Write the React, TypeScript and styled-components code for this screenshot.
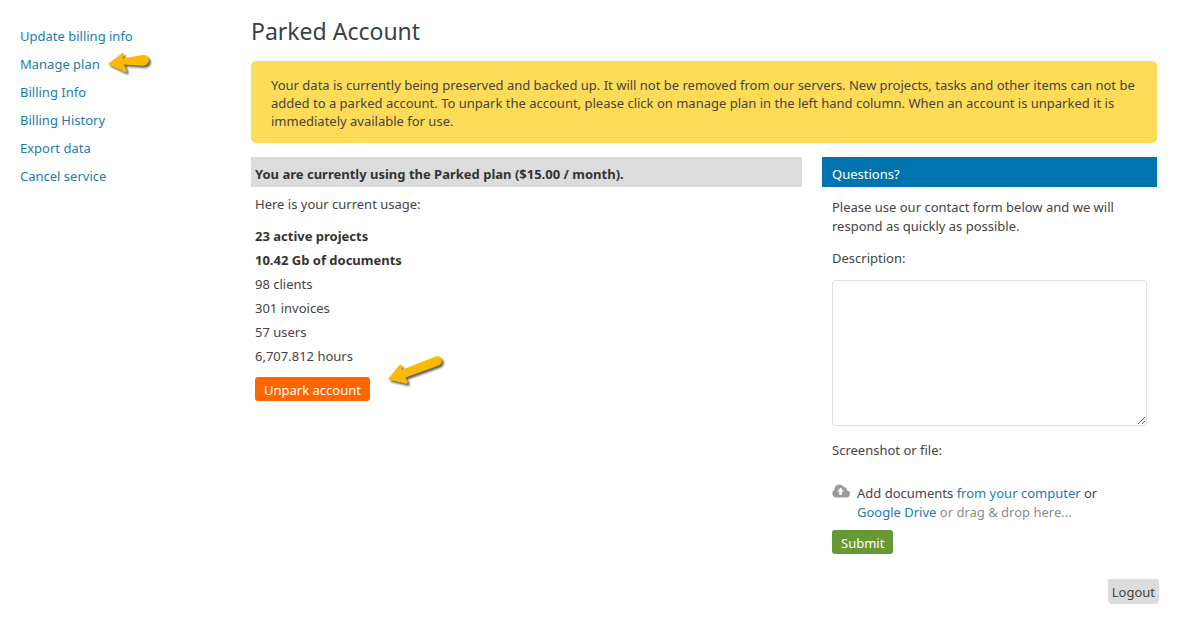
import React from "react";
import styled, { createGlobalStyle } from "styled-components";

const GlobalStyle = createGlobalStyle`
  *, *::before, *::after { box-sizing: border-box; }
  body {
    margin: 0;
    background: #fff;
    color: #444;
    font: 13px/19px "Noto Sans", "Open Sans", sans-serif;
  }
  h1, h2, p, ul { margin: 0; padding: 0; }
  ul { list-style: none; }
  button, textarea { font: inherit; }
`;

const Page = styled.div`
  display: flex;
  align-items: flex-start;
  padding: 16px 20px 0;
`;

const Sidebar = styled.nav`
  flex: 0 0 231px;
  padding-top: 6px;
`;

const NavItem = styled.li`
  position: relative;
  width: fit-content;
  line-height: 28px;
`;

const Link = styled.a`
  color: #1b7bb0;
  text-decoration: none;
`;

const Main = styled.main`
  flex: 1;
  min-width: 0;
`;

const Title = styled.h1`
  font-size: 23px;
  line-height: 30px;
  font-weight: 400;
  color: #3a3f44;
`;

const Notice = styled.p`
  margin-top: 15px;
  padding: 15px 12px 13px 20px;
  border-radius: 5px;
  background: #ffdc57;
  line-height: 18px;
`;

const Columns = styled.div`
  display: grid;
  grid-template-columns: 551fr 335fr;
  gap: 20px;
  margin-top: 14px;
`;

const PanelTitle = styled.h2<{ $tone: "plan" | "help" }>`
  padding: ${(p) => (p.$tone === "plan" ? "7px 4px 3px" : "7px 10px 3px")};
  background: ${(p) => (p.$tone === "plan" ? "#dcdcdc" : "#0074ad")};
  color: ${(p) => (p.$tone === "plan" ? "#333" : "#fff")};
  font-size: 13px;
  line-height: 20px;
  font-weight: ${(p) => (p.$tone === "plan" ? 700 : 400)};
`;

const PlanBody = styled.div`
  padding: 8px 4px 0;
`;

const UsageList = styled.ul`
  margin: 10px 0 9px;
`;

const UsageItem = styled.li<{ $strong?: boolean }>`
  line-height: 24px;
  font-weight: ${(p) => (p.$strong ? 700 : 400)};
  color: ${(p) => (p.$strong ? "#333" : "#444")};
`;

const ButtonAnchor = styled.div`
  position: relative;
  width: fit-content;
`;

const Button = styled.button<{ $color: string }>`
  display: block;
  height: 24px;
  padding: 2px 9px 0;
  border: 0;
  border-radius: 3px;
  background: ${(p) => p.$color};
  color: #fff;
  line-height: 22px;
`;

const ContactForm = styled.form`
  padding: 11px 10px 0;
`;

const Label = styled.label`
  display: block;
  margin-top: 13px;
`;

const Description = styled.textarea`
  display: block;
  width: 100%;
  height: 146px;
  margin: 12px 0 15px;
  border: 1px solid #e0e0e0;
  border-radius: 3px;
  background: #fff;
  resize: both;
`;

const UploadRow = styled.div`
  display: flex;
  gap: 7px;
  margin: 24px 0 8px;
`;

const UploadText = styled.p`
  flex: 1;
  padding-right: 20px;
`;

const Muted = styled.span`
  color: #8c8c8c;
`;

const Footer = styled.footer`
  display: flex;
  justify-content: flex-end;
  padding: 25px 18px 20px;
`;

const Logout = styled.button`
  height: 25px;
  padding: 2px 4px 0;
  border: 0;
  border-radius: 1px 1px 4px 4px;
  background: #dcdcdc;
  color: #444;
  line-height: 23px;
`;

const Pointer = styled.svg<{ $gap: number; $rise: number }>`
  position: absolute;
  left: calc(100% + ${(p) => p.$gap}px);
  top: ${(p) => p.$rise}px;
  overflow: visible;
  filter: drop-shadow(2px 2px 1px rgba(0, 0, 0, 0.65));
  pointer-events: none;
`;

const CloudIcon = () => (
  <svg width="18" height="14" viewBox="0 0 18 14" aria-hidden="true">
    <path
      fill="#999"
      d="M4.5 13.5A4.2 4.2 0 0 1 2.4 5.7 5 5 0 0 1 11.8 3.1 2.7 2.7 0 0 1 14.8 6.2 3.7 3.7 0 0 1 13.5 13.5Z"
    />
    <path fill="#fff" d="M8.6 3.6 12.2 7.4H9.9V11H7.3V7.4H5Z" />
  </svg>
);

const links = [
  "Update billing info",
  "Manage plan",
  "Billing Info",
  "Billing History",
  "Export data",
  "Cancel service",
];

const usage = [
  { text: "23 active projects", strong: true },
  { text: "10.42 Gb of documents", strong: true },
  { text: "98 clients" },
  { text: "301 invoices" },
  { text: "57 users" },
  { text: "6,707.812 hours" },
];

export default function App() {
  return (
    <>
      <GlobalStyle />
      <Page>
        <Sidebar aria-label="Account">
          <ul>
            {links.map((text) => (
              <NavItem key={text}>
                <Link href="#">{text}</Link>
                {text === "Manage plan" && (
                  <Pointer $gap={8} $rise={2} width="42" height="22" viewBox="0 0 42 22" aria-hidden="true">
                    <path
                      fill="#fcb900"
                      d="M0.5 11.5 13.5 1.5C15 .5 16 1.5 15.5 3L14.5 6.5 33 3.2C38 2.6 41 5 40.8 8.5 40.6 12 38 14 33 13.8L16 12.6 18.5 18.5C19 20 18 20.8 16.5 20L1.3 12.8Q0 12.2 .5 11.5Z"
                    />
                  </Pointer>
                )}
              </NavItem>
            ))}
          </ul>
        </Sidebar>
        <Main>
          <Title>Parked Account</Title>
          <Notice>
            Your data is currently being preserved and backed up. It will not be removed from our
            servers. New projects, tasks and other items can not be added to a parked account. To
            unpark the account, please click on manage plan in the left hand column. When an account
            is unparked it is immediately available for use.
          </Notice>
          <Columns>
            <section>
              <PanelTitle $tone="plan">
                You are currently using the Parked plan ($15.00 / month).
              </PanelTitle>
              <PlanBody>
                <p>Here is your current usage:</p>
                <UsageList>
                  {usage.map((item) => (
                    <UsageItem key={item.text} $strong={item.strong}>
                      {item.text}
                    </UsageItem>
                  ))}
                </UsageList>
                <ButtonAnchor>
                  <Button type="button" $color="#ff6600">
                    Unpark account
                  </Button>
                  <Pointer $gap={18} $rise={-22} width="55" height="30" viewBox="0 0 55 30" aria-hidden="true">
                    <path
                      fill="#fcb900"
                      d="M.6 23.5 11.2 10.2C12.4 9 13.5 9.5 13.6 11L14 14.8 47 1.8C50.5.6 53 2 53.6 4.6 54.2 7.3 53 9.5 50 10.8L17.5 22.4 19.6 26.5C20.2 28 19.4 29 18 28.7L1.8 25Q.2 24.6.6 23.5Z"
                    />
                  </Pointer>
                </ButtonAnchor>
              </PlanBody>
            </section>
            <section>
              <PanelTitle $tone="help">Questions?</PanelTitle>
              <ContactForm onSubmit={(e) => e.preventDefault()}>
                <p>Please use our contact form below and we will respond as quickly as possible.</p>
                <Label htmlFor="description">Description:</Label>
                <Description id="description" />
                <p>Screenshot or file:</p>
                <UploadRow>
                  <CloudIcon />
                  <UploadText>
                    Add documents <Link href="#">from your computer</Link> or{" "}
                    <Link href="#">Google Drive</Link> <Muted>or drag &amp; drop here...</Muted>
                  </UploadText>
                </UploadRow>
                <Button type="submit" $color="#669933">
                  Submit
                </Button>
              </ContactForm>
            </section>
          </Columns>
        </Main>
      </Page>
      <Footer>
        <Logout type="button">Logout</Logout>
      </Footer>
    </>
  );
}
